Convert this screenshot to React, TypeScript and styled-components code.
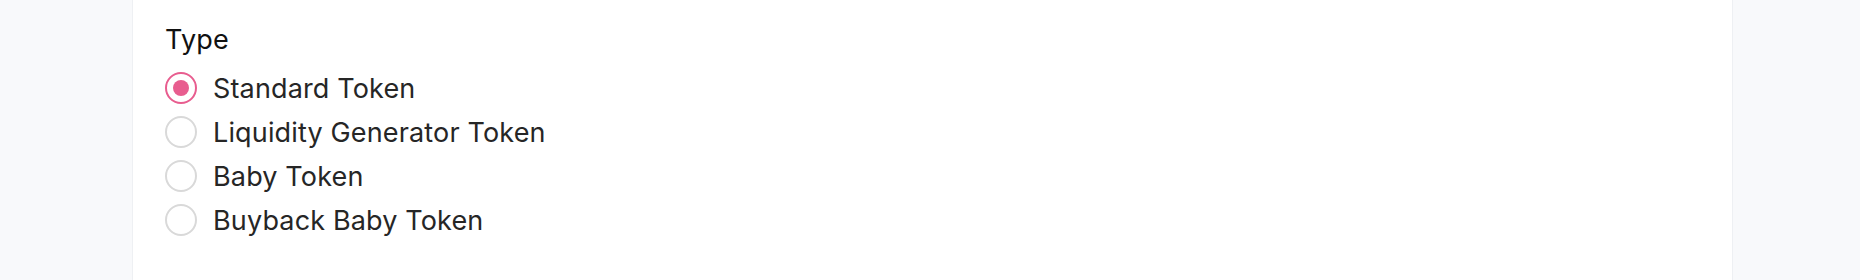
import React, { useState } from 'react'
import styled, { createGlobalStyle } from 'styled-components'

const GlobalStyle = createGlobalStyle`
  html, body {
    margin: 0;
    padding: 0;
    background: #f8f9fb;
  }
  body {
    font-family: Inter, 'Noto Sans', 'Liberation Sans', sans-serif;
    -webkit-font-smoothing: antialiased;
  }
`

const Page = styled.div`
  display: flex;
  height: 280px;
  padding: 0 127px 0 132px;
  box-sizing: border-box;
`

const Card = styled.section`
  flex: 1;
  background: #ffffff;
  border-left: 1px solid #eef0f3;
  border-right: 1px solid #eef0f3;
  padding: 20px 31px 0 32px;
  box-sizing: border-box;
`

const Label = styled.div`
  font-size: 27px;
  line-height: 40px;
  letter-spacing: 0.15px;
  color: #111111;
  margin-bottom: 6px;
`

const Options = styled.div`
  display: flex;
  flex-direction: column;
`

const Option = styled.label`
  display: flex;
  align-items: center;
  gap: 16px;
  height: 44px;
  font-size: 27px;
  letter-spacing: 0.15px;
  color: #262626;
  cursor: pointer;
  width: fit-content;
`

const HiddenInput = styled.input`
  display: none;
`

const Radio = styled.span<{ $checked: boolean }>`
  position: relative;
  width: 32px;
  height: 32px;
  border-radius: 50%;
  box-sizing: border-box;
  border: 2px solid ${p => (p.$checked ? '#e85d8f' : '#d9d9d9')};
  background: #ffffff;
  flex-shrink: 0;

  &::after {
    content: '';
    position: absolute;
    top: 6px;
    left: 6px;
    width: 16px;
    height: 16px;
    border-radius: 50%;
    background: #e85d8f;
    display: ${p => (p.$checked ? 'block' : 'none')};
  }
`

const types = ['Standard Token', 'Liquidity Generator Token', 'Baby Token', 'Buyback Baby Token']

export default function App() {
  const [selected, setSelected] = useState(types[0])

  return (
    <>
      <GlobalStyle />
      <Page>
        <Card>
          <Label>Type</Label>
          <Options>
            {types.map(t => (
              <Option key={t}>
                <HiddenInput
                  type='radio'
                  name='type'
                  checked={selected === t}
                  onChange={() => setSelected(t)}
                />
                <Radio $checked={selected === t} />
                {t}
              </Option>
            ))}
          </Options>
        </Card>
      </Page>
    </>
  )
}
